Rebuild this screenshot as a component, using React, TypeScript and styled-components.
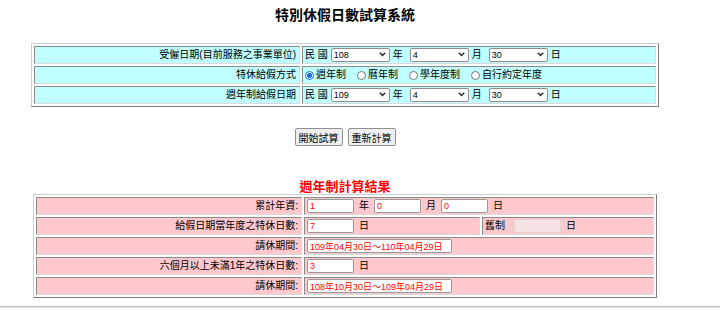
import React from 'react';
import styled, { createGlobalStyle } from 'styled-components';

const GlobalStyle = createGlobalStyle`
  body {
    margin: 0;
    background: #fff;
    color: #000;
    font-family: "Liberation Sans", "Noto Sans CJK TC", sans-serif;
  }
`;

const Page = styled.div`
  width: 690px;
  padding-top: 7px;
  display: flex;
  flex-direction: column;
  align-items: center;
`;

const Title = styled.h1`
  margin: 0 0 20px;
  font-size: 14px;
  line-height: 16px;
  font-weight: bold;
  color: #000;
`;

const FormTable = styled.table<{ $bg: string; $width: number }>`
  width: ${(p) => p.$width}px;
  table-layout: fixed;
  border-collapse: separate;
  border-spacing: 2px;
  border: 1px solid;
  border-color: #cfcfcf #7a7a7a #7a7a7a #cfcfcf;
  font-size: 10px;

  td {
    background: ${(p) => p.$bg};
  }
`;

const Cell = styled.td<{ $right?: boolean }>`
  box-sizing: border-box;
  height: 18px;
  padding: 0 3px 0 2px;
  border: 1px solid;
  border-color: #8a8a8a #dadada #dadada #8a8a8a;
  text-align: ${(p) => (p.$right ? 'right' : 'left')};
  white-space: nowrap;
  line-height: 14px;
`;

const Field = styled.div<{ $gap?: number }>`
  display: flex;
  align-items: center;
  gap: ${(p) => p.$gap ?? 5}px;
`;

const Unit = styled.span<{ $after?: number }>`
  margin-right: ${(p) => p.$after ?? 0}px;
`;

const SelectWrap = styled.span`
  position: relative;
  display: inline-block;
  width: 59px;
  height: 14px;
`;

const Select = styled.select`
  appearance: none;
  width: 100%;
  height: 100%;
  box-sizing: border-box;
  margin: 0;
  padding: 0 0 0 2px;
  border: 1px solid #8f8f8f;
  border-radius: 2px;
  background: #fff;
  color: #000;
  font: 9px "Liberation Sans", sans-serif;
`;

const Chevron = styled.svg`
  position: absolute;
  right: 4px;
  top: 4px;
  width: 7px;
  height: 5px;
  pointer-events: none;
`;

const RadioItem = styled.label`
  display: inline-flex;
  align-items: center;
  gap: 2px;
  margin-right: 11px;
`;

const Radio = styled.input.attrs({ type: 'radio' })`
  appearance: none;
  width: 9px;
  height: 9px;
  margin: 0;
  box-sizing: border-box;
  border: 1px solid #767676;
  border-radius: 50%;
  background: #fff;

  &:checked {
    border-color: #1a6fe0;
    background: radial-gradient(circle, #1a6fe0 0 2.2px, #fff 2.8px);
  }
`;

const Buttons = styled.div`
  display: flex;
  gap: 5px;
  margin-top: 21px;
`;

const Button = styled.button`
  height: 18px;
  padding: 0 3px;
  border: 1px solid #8f8f8f;
  border-radius: 2px;
  background: #efefef;
  color: #000;
  font: 10px "Liberation Sans", "Noto Sans CJK TC", sans-serif;
`;

const ResultTitle = styled.h2`
  margin: 34px 0 0;
  font-size: 13px;
  line-height: 14px;
  font-weight: bold;
  color: #f00;
`;

const ValueInput = styled.input<{ $w?: number; $off?: boolean }>`
  width: ${(p) => p.$w ?? 47}px;
  height: 14px;
  box-sizing: border-box;
  margin: 0;
  padding: 0 2px;
  border: 1px solid ${(p) => (p.$off ? '#e6d3d4' : '#9a9a9a')};
  border-radius: 2px;
  background: ${(p) => (p.$off ? '#f4e4e5' : '#fff')};
  color: #f00;
  font: 9px "Liberation Sans", "Noto Sans CJK TC", sans-serif;
`;

const Rule = styled.hr`
  margin: 8px 0 0;
  height: 0;
  border: 0;
  border-top: 1px solid #bdbdbd;
  border-bottom: 1px solid #e8e8e8;
`;

const DateSelect = ({ value }: { value: string }) => (
  <SelectWrap>
    <Select defaultValue={value}>
      <option>{value}</option>
    </Select>
    <Chevron viewBox="0 0 7 5">
      <path d="M0.8 0.8 L3.5 3.6 L6.2 0.8" fill="none" stroke="#222" strokeWidth="1.4" />
    </Chevron>
  </SelectWrap>
);

const DateRow = ({ label, year }: { label: string; year: string }) => (
  <tr>
    <Cell $right>{label}</Cell>
    <Cell>
      <Field $gap={3}>
        <Unit>民 國</Unit>
        <DateSelect value={year} />
        <Unit $after={4}>年</Unit>
        <DateSelect value="4" />
        <Unit $after={4}>月</Unit>
        <DateSelect value="30" />
        <Unit>日</Unit>
      </Field>
    </Cell>
  </tr>
);

const modes = ['週年制', '曆年制', '學年度制', '自行約定年度'];

const App = () => {
  return (
    <>
      <GlobalStyle />
      <Page>
        <Title>特別休假日數試算系統</Title>
        <FormTable $bg="#c0ffff" $width={628}>
          <colgroup>
            <col style={{ width: 266 }} />
            <col />
          </colgroup>
          <tbody>
            <DateRow label="受僱日期(目前服務之事業單位)" year="108" />
            <tr>
              <Cell $right>特休給假方式</Cell>
              <Cell>
                <Field $gap={0}>
                  {modes.map((m, i) => (
                    <RadioItem key={m}>
                      <Radio name="mode" defaultChecked={i === 0} />
                      {m}
                    </RadioItem>
                  ))}
                </Field>
              </Cell>
            </tr>
            <DateRow label="週年制給假日期" year="109" />
          </tbody>
        </FormTable>

        <Buttons>
          <Button>開始試算</Button>
          <Button>重新計算</Button>
        </Buttons>

        <ResultTitle>週年制計算結果</ResultTitle>
        <FormTable $bg="#ffc8cc" $width={624}>
          <colgroup>
            <col style={{ width: 266 }} />
            <col style={{ width: 176 }} />
            <col />
          </colgroup>
          <tbody>
            <tr>
              <Cell $right>累計年資:</Cell>
              <Cell colSpan={2}>
                <Field>
                  <ValueInput defaultValue="1" />
                  <Unit>年</Unit>
                  <ValueInput defaultValue="0" />
                  <Unit>月</Unit>
                  <ValueInput defaultValue="0" />
                  <Unit>日</Unit>
                </Field>
              </Cell>
            </tr>
            <tr>
              <Cell $right>給假日期當年度之特休日數:</Cell>
              <Cell>
                <Field>
                  <ValueInput defaultValue="7" />
                  <Unit>日</Unit>
                </Field>
              </Cell>
              <Cell>
                <Field>
                  <Unit $after={4}>舊制</Unit>
                  <ValueInput $off readOnly />
                  <Unit>日</Unit>
                </Field>
              </Cell>
            </tr>
            <tr>
              <Cell $right>請休期間:</Cell>
              <Cell colSpan={2}>
                <Field>
                  <ValueInput $w={145} defaultValue="109年04月30日～110年04月29日" />
                </Field>
              </Cell>
            </tr>
            <tr>
              <Cell $right>六個月以上未滿1年之特休日數:</Cell>
              <Cell colSpan={2}>
                <Field>
                  <ValueInput defaultValue="3" />
                  <Unit>日</Unit>
                </Field>
              </Cell>
            </tr>
            <tr>
              <Cell $right>請休期間:</Cell>
              <Cell colSpan={2}>
                <Field>
                  <ValueInput $w={145} defaultValue="108年10月30日～109年04月29日" />
                </Field>
              </Cell>
            </tr>
          </tbody>
        </FormTable>
      </Page>
      <Rule />
    </>
  );
};

export default App;
